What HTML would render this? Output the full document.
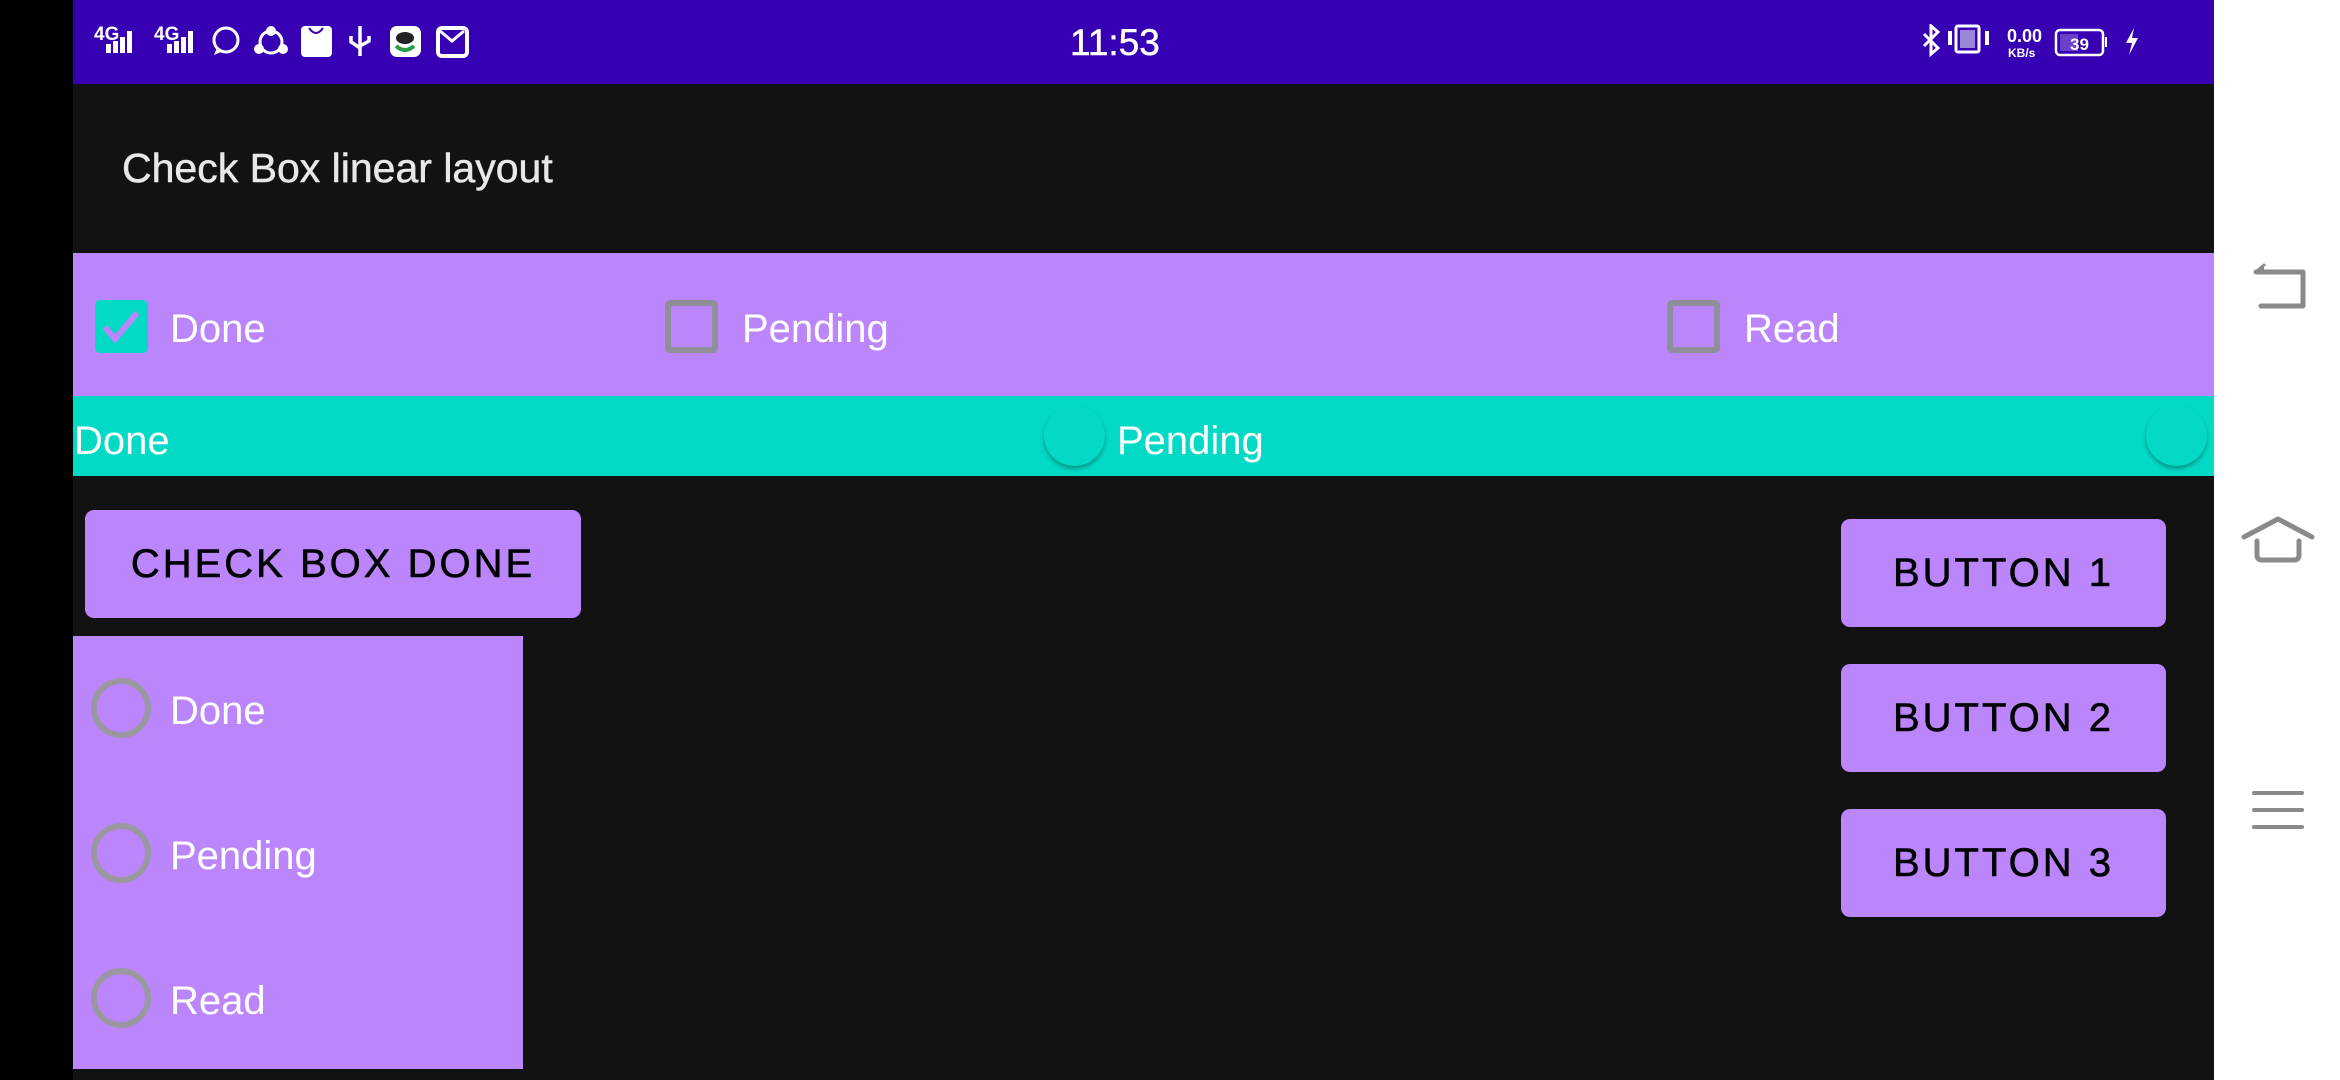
<!DOCTYPE html>
<html><head><meta charset="utf-8"><style>
*{margin:0;padding:0;box-sizing:border-box}
body{width:2340px;height:1080px;background:#000;position:relative;overflow:hidden;font-family:"Liberation Sans",sans-serif}
.a{position:absolute}
.t{position:absolute;color:#fff;font-size:40px;line-height:1;white-space:nowrap}
.btn{position:absolute;background:#bb86fc;border-radius:9px;color:#000;font-size:40px;letter-spacing:3px;display:flex;align-items:center;justify-content:center;-webkit-text-stroke:0.6px #000}
.cb{position:absolute;width:53px;height:53px;border:6px solid #8f8f9a;border-radius:5px}
.rd{position:absolute;width:60px;height:60px;border:6px solid #9a97a0;border-radius:50%}
.th{position:absolute;width:61px;height:61px;border-radius:50%;background:#03d9c4;box-shadow:0 3px 4px rgba(0,0,0,.3)}
</style></head><body>
<div class="a" style="left:73px;top:0;width:2141px;height:1080px;background:#121212"></div>
<div class="a" style="left:73px;top:0;width:2141px;height:84px;background:#3700b3"></div>
<div class="a" style="left:2214px;top:0;width:126px;height:1080px;background:#fff"></div>
<!-- status -->
<div class="t" style="left:1070px;top:24px;font-size:37px;-webkit-text-stroke:0.5px #fff">11:53</div>
<div class="t" style="left:94px;top:25px;font-size:19px;font-weight:bold">4G</div>
<div class="t" style="left:154px;top:25px;font-size:19px;font-weight:bold">4G</div>
<svg class="a" style="left:96px;top:24px" width="400" height="36" fill="#fff">
<rect x="10" y="20" width="5" height="9"/><rect x="17" y="17" width="5" height="12"/><rect x="24" y="13" width="5" height="16"/><rect x="31" y="7" width="5" height="22"/>
<rect x="71" y="20" width="5" height="9"/><rect x="78" y="17" width="5" height="12"/><rect x="85" y="13" width="5" height="16"/><rect x="92" y="7" width="5" height="22"/>
<circle cx="130" cy="16" r="12" fill="none" stroke="#fff" stroke-width="3"/><path d="M121 24l-3 7 7-3" fill="#fff"/>
<circle cx="175" cy="7" r="5"/><circle cx="163" cy="25" r="5"/><circle cx="187" cy="25" r="5"/><circle cx="175" cy="18" r="11" fill="none" stroke="#fff" stroke-width="3"/>
<rect x="205" y="2" width="31" height="31" rx="4"/><path d="M213 4q7 10 14 0" stroke="#3700b3" stroke-width="2" fill="none"/>
<path d="M264 2v30M255 12v6l9 6M273 12v5l-9 5" stroke="#fff" stroke-width="3.5" fill="none"/>
<rect x="294" y="2" width="31" height="31" rx="7"/><ellipse cx="309" cy="14" rx="9" ry="6" fill="#222"/><path d="M300 22q9 8 18 0" stroke="#2a9d4a" stroke-width="4" fill="none"/>
<rect x="342" y="4" width="29" height="28" rx="4" fill="none" stroke="#fff" stroke-width="4"/><path d="M344 7l12 10 12-10" stroke="#fff" stroke-width="3" fill="none"/>
</svg>
<svg class="a" style="left:1920px;top:24px" width="230" height="40" fill="#fff">
<path d="M4 10l14 14-7 6V2l7 6L4 22" stroke="#fff" stroke-width="3" fill="none"/>
<rect x="28" y="7" width="4" height="14"/><rect x="65" y="7" width="4" height="14"/><rect x="36" y="2" width="23" height="26" rx="2" fill="none" stroke="#fff" stroke-width="3"/><rect x="40" y="6" width="15" height="18" fill="#9b85d8"/>
<text x="87" y="18" font-size="18" font-weight="bold" font-family="Liberation Sans">0.00</text>
<text x="88" y="33" font-size="12" font-weight="bold" font-family="Liberation Sans">KB/s</text>
<rect x="136" y="6" width="47" height="25" rx="4" fill="none" stroke="#fff" stroke-width="2.5"/><rect x="140" y="10" width="18" height="17" fill="#6a3fc9"/><rect x="185" y="13" width="2" height="10"/>
<text x="150" y="26" font-size="17" font-weight="bold" font-family="Liberation Sans">39</text>
<path d="M214 4l-8 15h6l-3 12 9-17h-6z"/>
</svg>
<!-- app bar -->
<div class="t" style="left:122px;top:148px;font-size:41px;color:#e8e8e8;-webkit-text-stroke:0.5px #e8e8e8">Check Box linear layout</div>
<!-- purple row -->
<div class="a" style="left:73px;top:253px;width:2141px;height:143px;background:#bb86fc"></div>
<div class="a" style="left:95px;top:300px;width:53px;height:53px;background:#03dac5;border-radius:5px"></div>
<svg class="a" style="left:95px;top:300px" width="53" height="53"><path d="M10 27l10 12 22-26" stroke="#bb86fc" stroke-width="6" fill="none"/></svg>
<div class="t" style="left:170px;top:309px">Done</div>
<div class="cb" style="left:665px;top:300px"></div>
<div class="t" style="left:742px;top:309px">Pending</div>
<div class="cb" style="left:1667px;top:300px"></div>
<div class="t" style="left:1744px;top:309px">Read</div>
<!-- teal row -->
<div class="a" style="left:73px;top:396px;width:2141px;height:80px;background:#03dac5"></div>
<div class="t" style="left:74px;top:421px">Done</div>
<div class="th" style="left:1044px;top:405px"></div>
<div class="t" style="left:1117px;top:421px">Pending</div>
<div class="th" style="left:2146px;top:405px"></div>
<!-- buttons -->
<div class="btn" style="left:85px;top:510px;width:496px;height:108px">CHECK BOX DONE</div>
<div class="btn" style="left:1841px;top:519px;width:325px;height:108px">BUTTON 1</div>
<div class="btn" style="left:1841px;top:664px;width:325px;height:108px">BUTTON 2</div>
<div class="btn" style="left:1841px;top:809px;width:325px;height:108px">BUTTON 3</div>
<!-- radio group -->
<div class="a" style="left:73px;top:636px;width:450px;height:433px;background:#bb86fc"></div>
<div class="rd" style="left:91px;top:678px"></div><div class="t" style="left:170px;top:691px">Done</div>
<div class="rd" style="left:91px;top:823px"></div><div class="t" style="left:170px;top:836px">Pending</div>
<div class="rd" style="left:91px;top:968px"></div><div class="t" style="left:170px;top:981px">Read</div>
<!-- nav -->
<svg class="a" style="left:2214px;top:0" width="126" height="1080" fill="none" stroke="#8a8a8a" stroke-width="5" stroke-linecap="round" stroke-linejoin="round">
<path d="M42 272h47v34H47"/><path d="M50 265l-8 7h8" fill="#8a8a8a" stroke-width="3"/>
<path d="M30 537l34-18 34 18"/><path d="M43 541v14q0 5 5 5h32q5 0 5-5v-14"/>
<path d="M40 793h48M40 810h48M40 827h48" stroke-width="4"/>
</svg>
</body></html>
